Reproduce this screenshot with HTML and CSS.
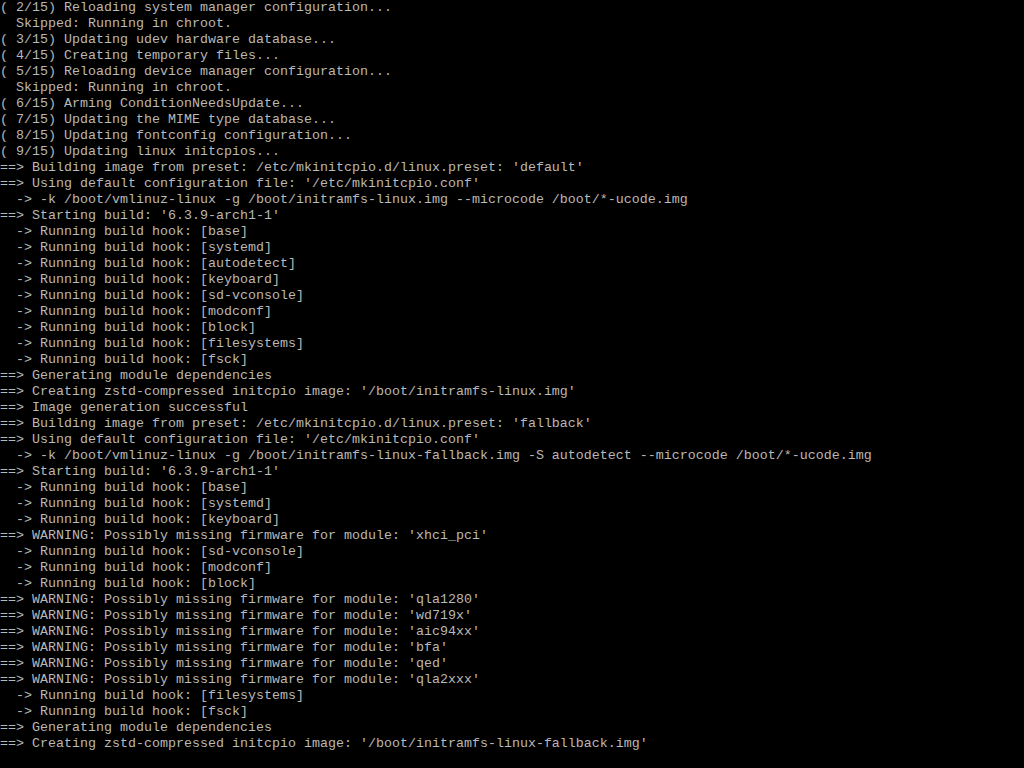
FILE: index.html
```html
<!DOCTYPE html>
<html>
<head>
<meta charset="utf-8">
<link rel="stylesheet" href="styles.css">
</head>
<body>
<pre class="console">( 2/15) Reloading system manager configuration...
  Skipped: Running in chroot.
( 3/15) Updating udev hardware database...
( 4/15) Creating temporary files...
( 5/15) Reloading device manager configuration...
  Skipped: Running in chroot.
( 6/15) Arming ConditionNeedsUpdate...
( 7/15) Updating the MIME type database...
( 8/15) Updating fontconfig configuration...
( 9/15) Updating linux initcpios...
==> Building image from preset: /etc/mkinitcpio.d/linux.preset: 'default'
==> Using default configuration file: '/etc/mkinitcpio.conf'
  -> -k /boot/vmlinuz-linux -g /boot/initramfs-linux.img --microcode /boot/*-ucode.img
==> Starting build: '6.3.9-arch1-1'
  -> Running build hook: [base]
  -> Running build hook: [systemd]
  -> Running build hook: [autodetect]
  -> Running build hook: [keyboard]
  -> Running build hook: [sd-vconsole]
  -> Running build hook: [modconf]
  -> Running build hook: [block]
  -> Running build hook: [filesystems]
  -> Running build hook: [fsck]
==> Generating module dependencies
==> Creating zstd-compressed initcpio image: '/boot/initramfs-linux.img'
==> Image generation successful
==> Building image from preset: /etc/mkinitcpio.d/linux.preset: 'fallback'
==> Using default configuration file: '/etc/mkinitcpio.conf'
  -> -k /boot/vmlinuz-linux -g /boot/initramfs-linux-fallback.img -S autodetect --microcode /boot/*-ucode.img
==> Starting build: '6.3.9-arch1-1'
  -> Running build hook: [base]
  -> Running build hook: [systemd]
  -> Running build hook: [keyboard]
==> WARNING: Possibly missing firmware for module: 'xhci_pci'
  -> Running build hook: [sd-vconsole]
  -> Running build hook: [modconf]
  -> Running build hook: [block]
==> WARNING: Possibly missing firmware for module: 'qla1280'
==> WARNING: Possibly missing firmware for module: 'wd719x'
==> WARNING: Possibly missing firmware for module: 'aic94xx'
==> WARNING: Possibly missing firmware for module: 'bfa'
==> WARNING: Possibly missing firmware for module: 'qed'
==> WARNING: Possibly missing firmware for module: 'qla2xxx'
  -> Running build hook: [filesystems]
  -> Running build hook: [fsck]
==> Generating module dependencies
==> Creating zstd-compressed initcpio image: '/boot/initramfs-linux-fallback.img'</pre>
</body>
</html>
```

FILE: styles.css
```css
html, body {
  margin: 0;
  padding: 0;
  background: #000000;
  width: 1024px;
  height: 768px;
  overflow: hidden;
}

.console {
  margin: 0;
  padding: 0;
  font-family: "Liberation Mono", "DejaVu Sans Mono", monospace;
  font-size: 13.333px;
  line-height: 16px;
  color: #b8b8b8;
  white-space: pre;
}
```
